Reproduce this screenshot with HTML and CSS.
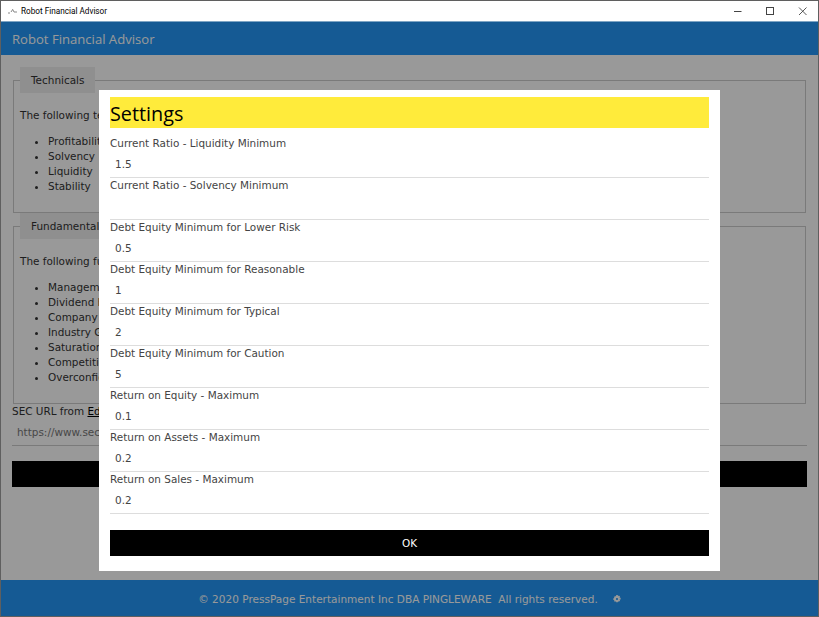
FILE: index.html
```html
<!DOCTYPE html>
<html lang="en">
<head>
    <meta charset="UTF-8">
    <meta name="viewport" content="width=device-width, initial-scale=1.0">
    <title>Robot Financial Advisor</title>
    <link rel="stylesheet" href="styles.css">
</head>
<body>
    <div class="window">
        <div class="titlebar">
            <svg class="app-icon" width="12" height="12" viewBox="0 0 12 12">
                <path d="M1 8h2M4 7l2-3M6 5l1 2h3" fill="none" stroke="#888" stroke-width="1"/>
            </svg>
            <span class="app-title">Robot Financial Advisor</span>
            <div class="win-buttons">
                <svg class="win-btn" width="32" height="20" viewBox="0 0 32 20"><path d="M12 10.5h7.5" stroke="#444" fill="none"/></svg>
                <svg class="win-btn" width="32" height="20" viewBox="0 0 32 20"><rect x="12.5" y="6.5" width="7" height="7" stroke="#444" fill="none"/></svg>
                <svg class="win-btn" width="32" height="20" viewBox="0 0 32 20"><path d="M13 6.5l7.5 7.5M20.5 6.5L13 14" stroke="#444" stroke-width="0.9" fill="none"/></svg>
            </div>
        </div>

        <div class="app">
            <header class="app-header">Robot Financial Advisor</header>

            <main class="content">
                <fieldset class="group group-technicals">
                    <legend>Technicals</legend>
                    <p>The following technical analysis is used:</p>
                    <ul>
                        <li>Profitability</li>
                        <li>Solvency</li>
                        <li>Liquidity</li>
                        <li>Stability</li>
                    </ul>
                </fieldset>
                <fieldset class="group group-fundamentals">
                    <legend>Fundamentals</legend>
                    <p>The following fundamental analysis is used:</p>
                    <ul>
                        <li>Management</li>
                        <li>Dividend History</li>
                        <li>Company Age</li>
                        <li>Industry Growth</li>
                        <li>Saturation</li>
                        <li>Competition</li>
                        <li>Overconfidence</li>
                    </ul>
                </fieldset>
                <div class="sec-label">SEC URL from <a href="#">Edgar</a></div>
                <input class="sec-input" type="text" value="https://www.sec.gov/">
                <button class="main-btn" type="button">Analyze</button>
            </main>

            <footer class="app-footer">
                <span>&copy; 2020 PressPage Entertainment Inc DBA PINGLEWARE&nbsp; All rights reserved.</span>
                <svg class="gear" width="8" height="8" viewBox="0 0 9 9">
                    <path d="M3.6 0h1.8l.2 1.3 1.1-.7 1.3 1.3-.7 1.1 1.3.2v1.8l-1.3.2.7 1.1-1.3 1.3-1.1-.7-.2 1.3H3.6l-.2-1.3-1.1.7L1 6.8l.7-1.1L.4 5.5V3.7l1.3-.2L1 2.4l1.3-1.3 1.1.7z" fill="#fff"/>
                    <circle cx="4.5" cy="4.5" r="1.2" fill="#2397f7"/>
                </svg>
            </footer>

            <div class="overlay">
                <div class="modal">
                    <h2 class="modal-title">Settings</h2>
                    <div class="fields">
                        <div class="field"><label>Current Ratio - Liquidity Minimum</label><input type="text" value="1.5"></div>
                        <div class="field"><label>Current Ratio - Solvency Minimum</label><input type="text" value=""></div>
                        <div class="field"><label>Debt Equity Minimum for Lower Risk</label><input type="text" value="0.5"></div>
                        <div class="field"><label>Debt Equity Minimum for Reasonable</label><input type="text" value="1"></div>
                        <div class="field"><label>Debt Equity Minimum for Typical</label><input type="text" value="2"></div>
                        <div class="field"><label>Debt Equity Minimum for Caution</label><input type="text" value="5"></div>
                        <div class="field"><label>Return on Equity - Maximum</label><input type="text" value="0.1"></div>
                        <div class="field"><label>Return on Assets - Maximum</label><input type="text" value="0.2"></div>
                        <div class="field"><label>Return on Sales - Maximum</label><input type="text" value="0.2"></div>
                    </div>
                    <button class="ok-btn" type="button">OK</button>
                </div>
            </div>
        </div>
    </div>
</body>
</html>
```

FILE: styles.css
```css
html, body {
    margin: 0;
    padding: 0;
    height: 100%;
    overflow: hidden;
}
body {
    font-family: "DejaVu Sans", Verdana, sans-serif;
    font-size: 10.45px;
    color: #333;
    background: #fff;
}
.window {
    height: 617px;
    box-sizing: border-box;
    border: 1px solid #5f5f5f;
    display: flex;
    flex-direction: column;
}
.titlebar {
    height: 20px;
    flex: none;
    display: flex;
    align-items: center;
    background: #fff;
    font-family: Roboto, "Open Sans", sans-serif;
    font-size: 8.2px;
    color: #000;
}
.app-icon {
    margin-left: 6px;
    margin-right: 2px;
}
.win-buttons {
    margin-left: auto;
    display: flex;
}
.win-btn {
    display: block;
}
.app {
    position: relative;
    flex: 1;
    display: flex;
    flex-direction: column;
    overflow: hidden;
    border-top: 1px solid #7fa5c4;
}
.app-header {
    height: 33px;
    flex: none;
    box-sizing: border-box;
    padding: 0 11px;
    line-height: 34px;
    font-family: "Open Sans", "Noto Sans", sans-serif;
    font-size: 13.1px;
    color: #fff;
    background: #2397f7;
}
.content {
    flex: 1;
    padding: 12px 11px 0;
    overflow: hidden;
}
.group {
    margin: 0 1px;
    padding: 0 6px;
    border: 1px solid #ccc;
    box-sizing: border-box;
}
.group legend {
    margin-left: 0;
    padding: 0 11px;
    height: 26px;
    line-height: 26px;
    background: #eee;
}
.group p {
    margin: 15px 0 0;
    line-height: 15px;
}
.group ul {
    margin: 10.6px 0 0;
    padding-left: 28px;
}
.group li {
    line-height: 15.1px;
}
.group-technicals {
    height: 146px;
}
.group-fundamentals {
    height: 191px;
}
.sec-label {
    line-height: 15px;
}
.sec-label a {
    color: #000;
}
.sec-input {
    display: block;
    width: 100%;
    box-sizing: border-box;
    height: 27px;
    padding: 0 5px;
    border: none;
    border-bottom: 1px solid #ccc;
    font: inherit;
    color: #777;
    background: transparent;
}
.main-btn, .ok-btn {
    display: block;
    width: 100%;
    height: 26px;
    border: none;
    font: inherit;
    color: #fff;
    background: #000;
}
.main-btn {
    margin-top: 15px;
}
.app-footer {
    height: 36px;
    flex: none;
    display: flex;
    align-items: center;
    justify-content: center;
    gap: 15px;
    background: #2397f7;
    color: #fff;
    box-sizing: border-box;
    padding-top: 2px;
    font-size: 10.52px;
}
.gear {
    display: block;
}

/* dim layer with the dialog on top of it */
.overlay {
    position: absolute;
    top: 0;
    left: 0;
    right: 0;
    bottom: 0;
    background: rgba(0, 0, 0, 0.4);
}
.modal {
    position: absolute;
    top: 68px;
    left: 98px;
    width: 599px;
    padding: 7px 11px 15px;
    background: #fff;
}
.modal-title {
    margin: 0;
    height: 31px;
    padding: 0;
    line-height: 34px;
    font-family: "Open Sans", "Noto Sans", sans-serif;
    font-size: 19.8px;
    font-weight: 400;
    color: #000;
    background: #ffeb3b;
}
.fields {
    padding-top: 7.6px;
}
.field {
    height: 42.1px;
    box-sizing: border-box;
    border-bottom: 1px solid #ddd;
    color: #444;
}
.field label {
    display: block;
    height: 15px;
    line-height: 15px;
}
.field input {
    display: block;
    width: 100%;
    box-sizing: border-box;
    height: 26px;
    padding: 0 5px;
    border: none;
    outline: none;
    font: inherit;
    color: #444;
    background: transparent;
}
.ok-btn {
    margin-top: 15.6px;
}
```
